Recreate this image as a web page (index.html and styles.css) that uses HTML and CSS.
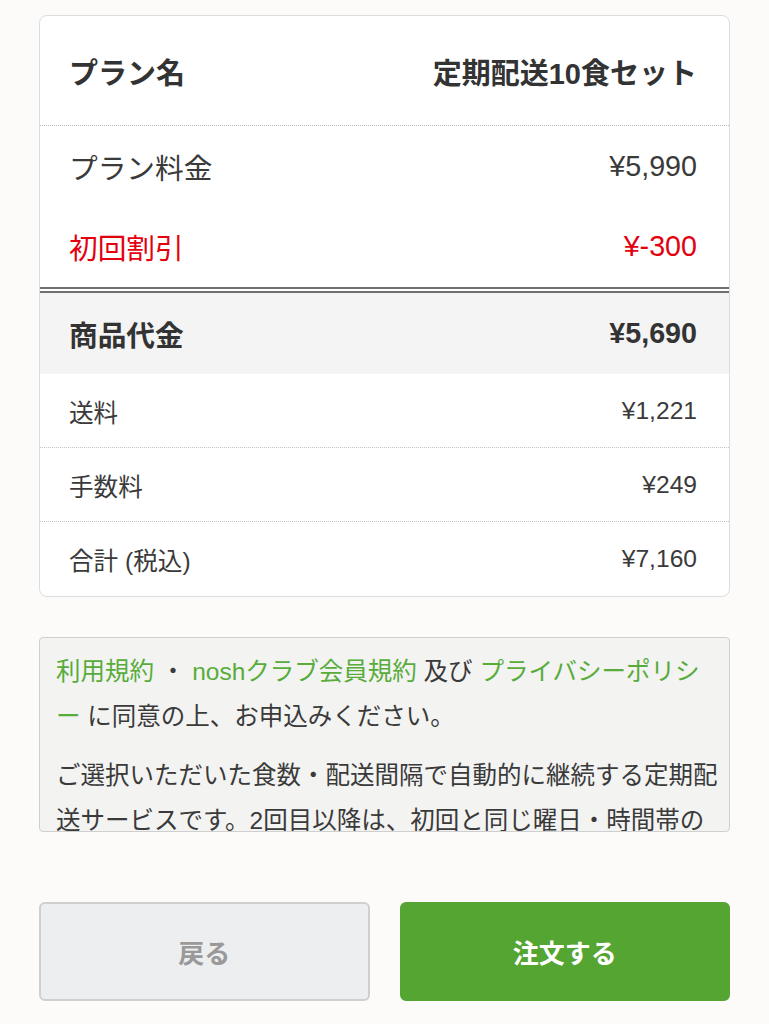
FILE: index.html
```html
<!DOCTYPE html>
<html lang="ja">
<head>
<meta charset="utf-8">
<link rel="stylesheet" href="styles.css">
</head>
<body>
<main class="page">
  <section class="summary">
    <div class="row row-head">
      <span>プラン名</span><span>定期配送10食セット</span>
    </div>
    <div class="group">
      <div class="row row-main"><span>プラン料金</span><span>¥5,990</span></div>
      <div class="row row-main row-discount"><span>初回割引</span><span>¥-300</span></div>
    </div>
    <div class="row row-subtotal"><span>商品代金</span><span>¥5,690</span></div>
    <div class="row row-small"><span>送料</span><span>¥1,221</span></div>
    <div class="row row-small"><span>手数料</span><span>¥249</span></div>
    <div class="row row-small row-last"><span>合計 (税込)</span><span>¥7,160</span></div>
  </section>

  <section class="terms">
    <p><a class="link">利用規約</a> ・ <a class="link">noshクラブ会員規約</a> 及び <a class="link">プライバシーポリシ<br>ー</a> に同意の上、お申込みください。</p>
    <p>ご選択いただいた食数・配送間隔で自動的に継続する定期配送サービスです。2回目以降は、初回と同じ曜日・時間帯のお届けとなります。</p>
  </section>

  <div class="actions">
    <button class="btn btn-back">戻る</button>
    <button class="btn btn-order">注文する</button>
  </div>
</main>
</body>
</html>
```

FILE: styles.css
```css
* { box-sizing: border-box; }
html, body { margin: 0; padding: 0; }
body {
  background: #fcfbfa;
  font-family: "Liberation Sans", "Noto Sans CJK JP", sans-serif;
  color: #333;
}
.page {
  padding: 15px 39px 0 39px;
  width: 769px;
}
.summary {
  background: #fff;
  border: 1px solid #dcdcdc;
  border-radius: 8px;
  overflow: hidden;
}
.row {
  display: flex;
  justify-content: space-between;
  align-items: center;
  padding: 0 32px 0 29px;
}
.row-head {
  height: 110px;
  font-size: 29px;
  font-weight: bold;
  border-bottom: 1px dotted #bbb;
  color: #333;
}
.group {
  border-bottom: 6px double #707070;
  padding-bottom: 1px;
}
.row-main {
  height: 80px;
  font-size: 28.7px;
  color: #3a3a3a;
}
.row-discount { color: #e3000f; }
.row-subtotal {
  height: 81px;
  background: #f4f4f4;
  font-size: 28.7px;
  font-weight: bold;
  color: #333;
}
.row-small {
  height: 74px;
  font-size: 24.6px;
  color: #3a3a3a;
  border-bottom: 1px dotted #c4c4c4;
}
.row-small:first-of-type { height: 73px; }
.row-last { border-bottom: none; height: 74px; }

.terms {
  margin-top: 40px;
  height: 195px;
  overflow: hidden;
  background: #f3f3f2;
  border: 1px solid #cfcfcf;
  border-radius: 4px;
  padding: 11px 10px 0 16px;
  font-size: 24.5px;
  line-height: 45px;
  color: #3a3a3a;
}
.terms p { margin: 0 0 14px 0; }
.link { color: #58ac3a; text-decoration: none; }

.actions {
  margin-top: 70px;
  display: flex;
  gap: 30px;
}
.btn {
  flex: 1 1 0;
  height: 99px;
  border-radius: 6px;
  font-family: "Noto Sans CJK JP", sans-serif;
  font-size: 26px;
  font-weight: bold;
}
.btn-back {
  background: #eceef0;
  border: 2px solid #cfcfcf;
  color: #999;
}
.btn-order {
  background: #55a532;
  border: 2px solid #55a532;
  color: #fff;
}
```
